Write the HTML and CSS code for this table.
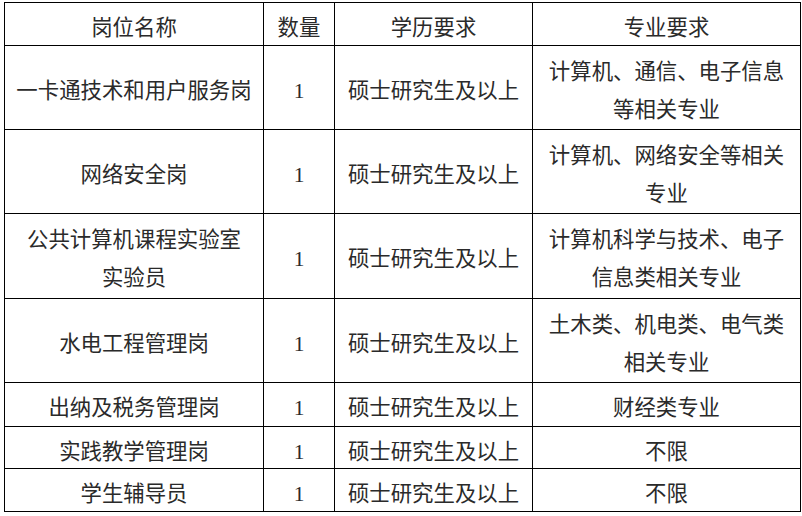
FILE: index.html
```html
<!DOCTYPE html>
<html lang="zh-CN">
<head>
<meta charset="utf-8">
<title>岗位表</title>
<link rel="stylesheet" href="styles.css">
</head>
<body>
<table class="jobs">
  <colgroup>
    <col class="c-name">
    <col class="c-num">
    <col class="c-edu">
    <col class="c-major">
  </colgroup>
  <tr class="r-short">
    <td>岗位名称</td><td>数量</td><td>学历要求</td><td>专业要求</td>
  </tr>
  <tr class="r-tall">
    <td>一卡通技术和用户服务岗</td><td>1</td><td>硕士研究生及以上</td><td>计算机、通信、电子信息<br>等相关专业</td>
  </tr>
  <tr class="r-tall">
    <td>网络安全岗</td><td>1</td><td>硕士研究生及以上</td><td>计算机、网络安全等相关<br>专业</td>
  </tr>
  <tr class="r-tall r-extra">
    <td>公共计算机课程实验室<br>实验员</td><td>1</td><td>硕士研究生及以上</td><td>计算机科学与技术、电子<br>信息类相关专业</td>
  </tr>
  <tr class="r-tall">
    <td>水电工程管理岗</td><td>1</td><td>硕士研究生及以上</td><td>土木类、机电类、电气类<br>相关专业</td>
  </tr>
  <tr class="r-short r-extra">
    <td>出纳及税务管理岗</td><td>1</td><td>硕士研究生及以上</td><td>财经类专业</td>
  </tr>
  <tr class="r-mid">
    <td>实践教学管理岗</td><td>1</td><td>硕士研究生及以上</td><td>不限</td>
  </tr>
  <tr class="r-short">
    <td>学生辅导员</td><td>1</td><td>硕士研究生及以上</td><td>不限</td>
  </tr>
</table>
</body>
</html>
```
FILE: styles.css
```css
html, body {
  margin: 0;
  padding: 0;
  background: #ffffff;
}

body {
  padding: 2px 0 0 4px;
}

.jobs {
  border-collapse: collapse;
  table-layout: fixed;
  width: 796px;
  font-family: "Liberation Serif", "Noto Sans CJK SC", serif;
  font-size: 21.4px;
  color: #2a2a2a;
}

.c-name { width: 259px; }
.c-num { width: 71px; }
.c-edu { width: 198px; }
.c-major { width: 268px; }

.jobs td {
  border: 1px solid #000000;
  text-align: center;
  vertical-align: middle;
  padding: 7px 0 0 0;
  white-space: nowrap;
}

.r-short td {
  height: 33px;
  line-height: 33px;
  padding-top: 9px;
}

.r-mid td {
  height: 32px;
  line-height: 32px;
  padding-top: 9px;
}

.r-tall td {
  height: 76px;
  line-height: 38px;
}

.r-extra td {
  padding-bottom: 1px;
}
```
